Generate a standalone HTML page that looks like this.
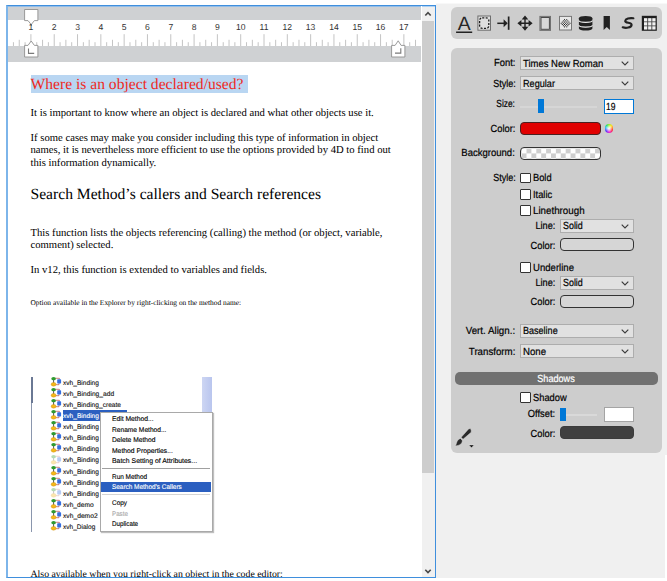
<!DOCTYPE html>
<html><head><meta charset="utf-8"><title>Where is an object declared/used?</title>
<style>
html,body{margin:0;padding:0;}
body{text-rendering:geometricPrecision;width:667px;height:581px;position:relative;overflow:hidden;background:#fff;font-family:"Liberation Sans",sans-serif;}
.abs,.abs *{position:absolute;}
#side{left:436px;top:3px;width:231px;height:575px;background:linear-gradient(#f8f8f8 0,#f8f8f8 1px,#f0f0f0 1px);}
#frame{left:6px;top:5px;width:430px;height:573px;box-sizing:border-box;border:1px solid #3f8fdd;border-left:2px solid #7db5ea;background:#fff;overflow:hidden;}
#doc{left:0;top:0;width:413px;height:571px;font-family:"Liberation Serif",serif;color:#000;}
#doc div{white-space:nowrap;}
.b{font-size:10.67px;line-height:12px;}
.h{font-size:15.6px;line-height:18px;}
.s{font-size:7.4px;line-height:9px;}
#ruler{left:0;top:0;width:413px;height:56px;background:#cfd1d3;box-shadow:inset 0 1px 0 #93bde8;}
#rwhite{left:0;top:14px;width:413px;height:26px;background:#fff;}
.num{font-family:"Liberation Sans",sans-serif;font-size:8.6px;line-height:10px;color:#333;width:20px;text-align:center;top:16px;}
#sb{left:414px;top:0;width:13px;height:571px;background:#f0f0f0;box-shadow:inset 0 1px 0 #aed1f3;}
#thumb{left:0;top:14.5px;width:12px;height:452.5px;background:#cdcdcd;}
.panel{background:#cdcdcd;border-radius:6px;}
.lbl{font-size:10.3px;line-height:12px;color:#000;white-space:nowrap;-webkit-text-stroke:0.2px currentColor;}
.r{text-align:right;}
.combo{box-sizing:border-box;border:1px solid #adadad;background:#e1e1e1;}
.combo span{left:2px;top:0.8px;font-size:10px;letter-spacing:-0.25px;line-height:12px;white-space:nowrap;}
.combo svg{right:5px;top:4px;}
.cb{box-sizing:border-box;width:11px;height:10.5px;border-radius:1px;border:1px solid #333;background:#fff;}
.sw{box-sizing:border-box;border:1px solid #333;border-radius:4px;height:13px;}
.mi{font-size:6.8px;line-height:8px;white-space:nowrap;color:#000;left:10.4px;}
.st{line-height:8px;white-space:nowrap;transform-origin:0 50%;-webkit-text-stroke:0.12px currentColor;}
</style></head><body>

<div id="side" class="abs">
<div class="panel" style="left:15px;top:4px;width:211px;height:32px;"></div>
<div class="panel" style="left:15px;top:44.5px;width:211px;height:405px;"></div>
<div style="left:229px;top:452px;width:2px;height:125px;background:#fff;"></div>
<svg style="left:15px;top:4px" width="211" height="32" viewBox="451 7 211 32">
<text x="464.2" y="29.8" font-family="Liberation Sans, sans-serif" font-size="19.4" text-anchor="middle" fill="#262626">A</text>
<rect x="456.1" y="31.5" width="16.1" height="1.5" fill="#222"/>
<rect x="477.9" y="16" width="12.6" height="14.2" fill="#dedede" stroke="#6e6e6e" stroke-width="1"/>
<rect x="479.6" y="17.8" width="9.2" height="10.6" rx="2.6" fill="none" stroke="#1c1c1c" stroke-width="1.3" stroke-dasharray="2.1 1.4"/>
<path d="M497.3 23.3H504.5" fill="none" stroke="#222" stroke-width="1.5"/><path d="M503.6 19.3L507.7 23.3L503.6 27.3Z" fill="#222"/>
<rect x="507.8" y="16.5" width="1.7" height="13.3" fill="#222"/>
<path d="M519.5 23.2H530.5 M525 17.7V28.7" stroke="#222" stroke-width="1.4" fill="none"/>
<path d="M525 15.5L528.3 19.5H521.7Z M525 30.8L528.3 26.8H521.7Z M517.4 23.2L521.4 19.9V26.5Z M532.6 23.2L528.6 19.9V26.5Z" fill="#222"/>
<rect x="539.9" y="16.4" width="10.6" height="14" fill="#d8d8d8" stroke="#707070" stroke-width="1"/>
<rect x="541" y="17.5" width="8.4" height="11.8" fill="#d8d8d8" stroke="#4a4a4a" stroke-width="1"/>
<rect x="559.5" y="16.4" width="12" height="13.6" fill="#e8e8e8" stroke="#777" stroke-width="1"/>
<rect x="560.70" y="22.80" width="1" height="1" fill="#1a1a1a"/>
<rect x="561.80" y="21.60" width="1" height="1" fill="#1a1a1a"/>
<rect x="561.80" y="24.00" width="1" height="1" fill="#1a1a1a"/>
<rect x="562.90" y="20.40" width="1" height="1" fill="#1a1a1a"/>
<rect x="562.90" y="22.80" width="1" height="1" fill="#1a1a1a"/>
<rect x="562.90" y="25.20" width="1" height="1" fill="#1a1a1a"/>
<rect x="564.00" y="19.20" width="1" height="1" fill="#1a1a1a"/>
<rect x="564.00" y="21.60" width="1" height="1" fill="#1a1a1a"/>
<rect x="564.00" y="24.00" width="1" height="1" fill="#1a1a1a"/>
<rect x="564.00" y="26.40" width="1" height="1" fill="#1a1a1a"/>
<rect x="565.10" y="20.40" width="1" height="1" fill="#1a1a1a"/>
<rect x="565.10" y="22.80" width="1" height="1" fill="#1a1a1a"/>
<rect x="565.10" y="25.20" width="1" height="1" fill="#1a1a1a"/>
<rect x="566.20" y="19.20" width="1" height="1" fill="#1a1a1a"/>
<rect x="566.20" y="21.60" width="1" height="1" fill="#1a1a1a"/>
<rect x="566.20" y="24.00" width="1" height="1" fill="#1a1a1a"/>
<rect x="566.20" y="26.40" width="1" height="1" fill="#1a1a1a"/>
<rect x="567.30" y="20.40" width="1" height="1" fill="#1a1a1a"/>
<rect x="567.30" y="22.80" width="1" height="1" fill="#1a1a1a"/>
<rect x="567.30" y="25.20" width="1" height="1" fill="#1a1a1a"/>
<rect x="568.40" y="21.60" width="1" height="1" fill="#1a1a1a"/>
<rect x="568.40" y="24.00" width="1" height="1" fill="#1a1a1a"/>
<rect x="569.50" y="22.80" width="1" height="1" fill="#1a1a1a"/>
<path d="M578.9 18.2a6.75 2.3 0 0 1 13.5 0V28.6a6.75 1.9 0 0 1 -13.5 0Z" fill="#222"/>
<path d="M578.9 20.5a6.75 1.8 0 0 0 13.5 0M578.9 25.3a6.75 1.8 0 0 0 13.5 0" fill="none" stroke="#ececec" stroke-width="1.2"/>
<path d="M603.6 16.1H609.9V30L606.75 27L603.6 30Z" fill="#222"/>
<path d="M633.4 18.3C629.6 17.6 625.4 18.9 625.2 21C625 23.3 632 22.4 631.6 25C631.2 27.7 626 28.4 622.7 27.3" fill="none" stroke="#222" stroke-width="2.1" stroke-linecap="round"/>
<rect x="641.8" y="15.8" width="15" height="15" fill="#1e1e1e"/>
<rect x="644" y="18.2" width="11.7" height="11.5" fill="#4a4a4a"/>
<rect x="644.00" y="18.20" width="3.2" height="3.2" fill="#f0f0f0"/>
<rect x="644.00" y="22.25" width="3.2" height="3.2" fill="#f0f0f0"/>
<rect x="644.00" y="26.30" width="3.2" height="3.2" fill="#f0f0f0"/>
<rect x="648.15" y="18.20" width="3.2" height="3.2" fill="#f0f0f0"/>
<rect x="648.15" y="22.25" width="3.2" height="3.2" fill="#f0f0f0"/>
<rect x="648.15" y="26.30" width="3.2" height="3.2" fill="#f0f0f0"/>
<rect x="652.30" y="18.20" width="3.2" height="3.2" fill="#f0f0f0"/>
<rect x="652.30" y="22.25" width="3.2" height="3.2" fill="#f0f0f0"/>
<rect x="652.30" y="26.30" width="3.2" height="3.2" fill="#f0f0f0"/>
</svg>
<div class="lbl" style="right:151.7px;top:55px;transform:scaleX(0.916);transform-origin:100% 50%;color:#000;">Font:</div>
<div class="combo" style="left:84px;top:53px;width:114px;height:14px;"></div>
<svg style="left:185px;top:58px" width="8" height="5" viewBox="0 0 8 5"><path d="M0.7 0.6L4 3.9L7.3 0.6" fill="none" stroke="#3a3a3a" stroke-width="1.15"/></svg>
<div class="lbl" style="left:86.6px;top:56px;transform:scaleX(0.920);transform-origin:0 50%;color:#000;">Times New Roman</div>
<div class="lbl" style="right:151.7px;top:76px;transform:scaleX(0.877);transform-origin:100% 50%;color:#000;">Style:</div>
<div class="combo" style="left:84px;top:73px;width:114px;height:14px;"></div>
<svg style="left:185px;top:78px" width="8" height="5" viewBox="0 0 8 5"><path d="M0.7 0.6L4 3.9L7.3 0.6" fill="none" stroke="#3a3a3a" stroke-width="1.15"/></svg>
<div class="lbl" style="left:86.6px;top:76px;transform:scaleX(0.887);transform-origin:0 50%;color:#000;">Regular</div>
<div class="lbl" style="right:151.7px;top:96px;transform:scaleX(0.812);transform-origin:100% 50%;color:#000;">Size:</div>
<div style="left:84px;top:102.6px;width:77px;height:2px;background:#d6d6d6;"></div>
<div style="left:102px;top:96px;width:5.5px;height:14px;background:#0078d7;"></div>
<div style="left:168px;top:96px;width:30px;height:15px;box-sizing:border-box;border:1px solid #0078d7;background:#fff;"></div>
<div class="lbl" style="left:170.3px;top:99px;transform:scaleX(0.829);transform-origin:0 50%;color:#000;">19</div>
<div class="lbl" style="right:151.7px;top:121px;transform:scaleX(0.910);transform-origin:100% 50%;color:#000;">Color:</div>
<div class="sw" style="left:84px;top:119px;width:81px;height:13px;background:#e10000;border-color:#4a2020;"></div>
<div style="left:168.9px;top:121.4px;width:8.6px;height:8.6px;border-radius:50%;background:radial-gradient(circle,#fff 0%,rgba(255,255,255,0.6) 30%,rgba(255,255,255,0) 65%),conic-gradient(from 0deg,#a0f020,#ffe020 12%,#ff3020 30%,#f020d0 48%,#5030ff 64%,#20c0f0 80%,#30e060 92%,#a0f020);"></div>
<div class="lbl" style="right:151.7px;top:145px;transform:scaleX(0.925);transform-origin:100% 50%;color:#000;">Background:</div>
<div class="sw" style="left:84px;top:144px;width:81px;height:13px;overflow:hidden;background-color:#fff;background-image:repeating-conic-gradient(#cfcfcf 0% 25%,#fff 0% 50%);background-size:9.8px 9.8px;background-position:0.6px 0.5px;"></div>
<div class="lbl" style="right:151.7px;top:170px;transform:scaleX(0.877);transform-origin:100% 50%;color:#000;">Style:</div>
<div class="cb" style="left:84px;top:169.5px;"></div>
<div class="lbl" style="left:97.4px;top:170px;transform:scaleX(0.902);transform-origin:0 50%;color:#000;">Bold</div>
<div class="cb" style="left:84px;top:186px;"></div>
<div class="lbl" style="left:97.4px;top:187px;transform:scaleX(0.902);transform-origin:0 50%;color:#000;">Italic</div>
<div class="cb" style="left:84px;top:202.3px;"></div>
<div class="lbl" style="left:97.4px;top:203px;transform:scaleX(0.948);transform-origin:0 50%;color:#000;">Linethrough</div>
<div class="lbl" style="right:111.6px;top:218px;transform:scaleX(0.891);transform-origin:100% 50%;color:#000;">Line:</div>
<div class="combo" style="left:124px;top:215.6px;width:73.5px;height:14px;"></div>
<svg style="left:184.5px;top:220.6px" width="8" height="5" viewBox="0 0 8 5"><path d="M0.7 0.6L4 3.9L7.3 0.6" fill="none" stroke="#3a3a3a" stroke-width="1.15"/></svg>
<div class="lbl" style="left:126.6px;top:218px;transform:scaleX(0.865);transform-origin:0 50%;color:#000;">Solid</div>
<div class="lbl" style="right:111.6px;top:238px;transform:scaleX(0.910);transform-origin:100% 50%;color:#000;">Color:</div>
<div class="sw" style="left:124px;top:235.2px;width:74px;height:13px;background:#d6d6d6;border-color:#333;"></div>
<div class="cb" style="left:84px;top:259px;"></div>
<div class="lbl" style="left:97.4px;top:260px;transform:scaleX(0.930);transform-origin:0 50%;color:#000;">Underline</div>
<div class="lbl" style="right:111.6px;top:275px;transform:scaleX(0.891);transform-origin:100% 50%;color:#000;">Line:</div>
<div class="combo" style="left:124px;top:272.5px;width:73.5px;height:14px;"></div>
<svg style="left:184.5px;top:277.5px" width="8" height="5" viewBox="0 0 8 5"><path d="M0.7 0.6L4 3.9L7.3 0.6" fill="none" stroke="#3a3a3a" stroke-width="1.15"/></svg>
<div class="lbl" style="left:126.6px;top:275px;transform:scaleX(0.865);transform-origin:0 50%;color:#000;">Solid</div>
<div class="lbl" style="right:111.6px;top:294px;transform:scaleX(0.910);transform-origin:100% 50%;color:#000;">Color:</div>
<div class="sw" style="left:124px;top:292px;width:74px;height:13px;background:#d6d6d6;border-color:#333;"></div>
<div class="lbl" style="right:151.7px;top:323px;transform:scaleX(0.948);transform-origin:100% 50%;color:#000;">Vert. Align.:</div>
<div class="combo" style="left:84px;top:320.5px;width:114px;height:14px;"></div>
<svg style="left:185px;top:325.5px" width="8" height="5" viewBox="0 0 8 5"><path d="M0.7 0.6L4 3.9L7.3 0.6" fill="none" stroke="#3a3a3a" stroke-width="1.15"/></svg>
<div class="lbl" style="left:86.6px;top:323px;transform:scaleX(0.878);transform-origin:0 50%;color:#000;">Baseline</div>
<div class="lbl" style="right:151.7px;top:344px;transform:scaleX(0.943);transform-origin:100% 50%;color:#000;">Transform:</div>
<div class="combo" style="left:84px;top:341px;width:114px;height:14px;"></div>
<svg style="left:185px;top:346px" width="8" height="5" viewBox="0 0 8 5"><path d="M0.7 0.6L4 3.9L7.3 0.6" fill="none" stroke="#3a3a3a" stroke-width="1.15"/></svg>
<div class="lbl" style="left:86.6px;top:344px;transform:scaleX(0.938);transform-origin:0 50%;color:#000;">None</div>
<div style="left:19px;top:369px;width:203px;height:12.5px;border-radius:5px;background:#717171;"></div>
<div class="lbl" style="left:70.2px;width:100px;text-align:center;top:371px;transform:scaleX(0.887);transform-origin:50% 50%;color:#fff;">Shadows</div>
<div class="cb" style="left:84px;top:389.3px;"></div>
<div class="lbl" style="left:97.4px;top:390px;transform:scaleX(0.905);transform-origin:0 50%;color:#000;">Shadow</div>
<div class="lbl" style="right:111.6px;top:406px;transform:scaleX(0.906);transform-origin:100% 50%;color:#000;">Offset:</div>
<div style="left:125px;top:410.6px;width:36px;height:2px;background:#d9d9d9;"></div>
<div style="left:124px;top:405px;width:6px;height:13px;background:#0078d7;"></div>
<div style="left:168px;top:404px;width:30px;height:15px;box-sizing:border-box;border:1px solid #a4a4a4;background:#fff;"></div>
<div class="lbl" style="right:111.6px;top:426px;transform:scaleX(0.910);transform-origin:100% 50%;color:#000;">Color:</div>
<div class="sw" style="left:124px;top:423px;width:73.5px;height:13px;background:#404040;border-color:#3c3c3c;"></div>
<svg style="left:18px;top:424px" width="22" height="22" viewBox="454 427 22 22">
<path d="M468.6 428.9L470.3 428.5L471.2 430L471.2 432.3L463 439.3L461.2 437.3Z" fill="#2a2a2a" stroke="#d8d8d8" stroke-width="0.5"/>
<path d="M460.4 438.4L462.2 440.2C462.8 443.6 459.2 445.9 455.1 445.8C457 444.6 455.8 440.2 460.4 438.4Z" fill="#2a2a2a" stroke="#d8d8d8" stroke-width="0.5"/>
<path d="M468.8 444.9L474.2 444.9L471.5 447.7Z" fill="#111" stroke="#e0e0e0" stroke-width="0.5"/>
</svg>
</div>
<div id="frame" class="abs">
<div id="doc">
<div style="left:22.6px;top:69px;width:217.3px;height:17.6px;background:#b9d6f2;"></div>
<div class="h" style="left:22.5px;top:70px;color:#ee2a1e;">Where is an object declared/used?</div>
<div class="b" style="left:22.5px;top:101px;">It is important to know where an object is declared and what other objects use it.</div>
<div class="b" style="left:22.5px;top:126px;">If some cases may make you consider including this type of information in object</div>
<div class="b" style="left:22.5px;top:138px;">names, it is nevertheless more efficient to use the options provided by 4D to find out</div>
<div class="b" style="left:22.5px;top:151px;">this information dynamically.</div>
<div class="h" style="left:22.5px;top:180px;">Search Method’s callers and Search references</div>
<div class="b" style="left:22.5px;top:221px;">This function lists the objects referencing (calling) the method (or object, variable,</div>
<div class="b" style="left:22.5px;top:233px;">comment) selected.</div>
<div class="b" style="left:22.5px;top:258px;">In v12, this function is extended to variables and fields.</div>
<div class="s" style="left:22.5px;top:292px;">Option available in the Explorer by right-clicking on the method name:</div>
<div class="b" style="left:22.5px;top:563px;font-size:9.82px;">Also available when you right-click an object in the code editor:</div>
<div id="shot" style="left:23px;top:371px;width:183px;height:156px;font-family:'Liberation Sans',sans-serif;">
<div style="left:0;top:0;width:1px;height:155px;background:#8a96ad;"></div>
<div style="left:0;top:0;width:1.5px;height:26px;background:#6a7894;"></div>
<div style="left:170.5px;top:0;width:10px;height:34.5px;background:linear-gradient(90deg,#cdd6f3,#b9c5ee);"></div>
<div style="left:31.7px;top:33.4px;width:64px;height:10.4px;background:#2b5fc0;"></div>
<svg style="left:19px;top:-1.00px" width="12" height="11" viewBox="0 0 12 11"><path d="M3.6 3.5V7" stroke="#444" stroke-width="0.9"/><path d="M5.4 2.3H9.4V3.6M5.6 8.7H9V7.2" stroke="#b04a4a" stroke-width="0.7" fill="none"/><ellipse cx="3.6" cy="2.7" rx="2.3" ry="1.6" fill="#2f9a2f"/><ellipse cx="3.6" cy="8.3" rx="2.5" ry="1.9" fill="#f5b818" stroke="#c98a10" stroke-width="0.4"/><rect x="7.2" y="3.2" width="3.9" height="4.2" rx="0.7" fill="#356ee0"/></svg>
<div class="st" style="left:32.1px;top:3px;font-size:6.7px;color:#111;transform:scaleX(0.986);">xvh_Binding</div>
<svg style="left:19px;top:10.08px" width="12" height="11" viewBox="0 0 12 11"><path d="M3.6 3.5V7" stroke="#444" stroke-width="0.9"/><path d="M5.4 2.3H9.4V3.6M5.6 8.7H9V7.2" stroke="#b04a4a" stroke-width="0.7" fill="none"/><ellipse cx="3.6" cy="2.7" rx="2.3" ry="1.6" fill="#2f9a2f"/><ellipse cx="3.6" cy="8.3" rx="2.5" ry="1.9" fill="#f5b818" stroke="#c98a10" stroke-width="0.4"/><rect x="7.2" y="3.2" width="3.9" height="4.2" rx="0.7" fill="#356ee0"/></svg>
<div class="st" style="left:32.1px;top:14px;font-size:6.7px;color:#111;transform:scaleX(0.996);">xvh_Binding_add</div>
<svg style="left:19px;top:21.16px" width="12" height="11" viewBox="0 0 12 11"><path d="M3.6 3.5V7" stroke="#444" stroke-width="0.9"/><path d="M5.4 2.3H9.4V3.6M5.6 8.7H9V7.2" stroke="#b04a4a" stroke-width="0.7" fill="none"/><ellipse cx="3.6" cy="2.7" rx="2.3" ry="1.6" fill="#2f9a2f"/><ellipse cx="3.6" cy="8.3" rx="2.5" ry="1.9" fill="#f5b818" stroke="#c98a10" stroke-width="0.4"/><rect x="7.2" y="3.2" width="3.9" height="4.2" rx="0.7" fill="#356ee0"/></svg>
<div class="st" style="left:32.1px;top:25px;font-size:6.7px;color:#111;transform:scaleX(0.987);">xvh_Binding_create</div>
<svg style="left:19px;top:32.24px" width="12" height="11" viewBox="0 0 12 11"><path d="M3.6 3.5V7" stroke="#444" stroke-width="0.9"/><path d="M5.4 2.3H9.4V3.6M5.6 8.7H9V7.2" stroke="#b04a4a" stroke-width="0.7" fill="none"/><ellipse cx="3.6" cy="2.7" rx="2.3" ry="1.6" fill="#2f9a2f"/><ellipse cx="3.6" cy="8.3" rx="2.5" ry="1.9" fill="#f5b818" stroke="#c98a10" stroke-width="0.4"/><rect x="7.2" y="3.2" width="3.9" height="4.2" rx="0.7" fill="#356ee0"/></svg>
<div class="st" style="left:32.1px;top:36px;font-size:6.7px;color:#fff;transform:scaleX(0.986);">xvh_Binding</div>
<svg style="left:19px;top:43.32px" width="12" height="11" viewBox="0 0 12 11"><path d="M3.6 3.5V7" stroke="#444" stroke-width="0.9"/><path d="M5.4 2.3H9.4V3.6M5.6 8.7H9V7.2" stroke="#b04a4a" stroke-width="0.7" fill="none"/><ellipse cx="3.6" cy="2.7" rx="2.3" ry="1.6" fill="#2f9a2f"/><ellipse cx="3.6" cy="8.3" rx="2.5" ry="1.9" fill="#f5b818" stroke="#c98a10" stroke-width="0.4"/><rect x="7.2" y="3.2" width="3.9" height="4.2" rx="0.7" fill="#356ee0"/></svg>
<div class="st" style="left:32.1px;top:47px;font-size:6.7px;color:#111;transform:scaleX(0.986);">xvh_Binding</div>
<svg style="left:19px;top:54.40px" width="12" height="11" viewBox="0 0 12 11"><path d="M3.6 3.5V7" stroke="#444" stroke-width="0.9"/><path d="M5.4 2.3H9.4V3.6M5.6 8.7H9V7.2" stroke="#b04a4a" stroke-width="0.7" fill="none"/><ellipse cx="3.6" cy="2.7" rx="2.3" ry="1.6" fill="#2f9a2f"/><ellipse cx="3.6" cy="8.3" rx="2.5" ry="1.9" fill="#f5b818" stroke="#c98a10" stroke-width="0.4"/><rect x="7.2" y="3.2" width="3.9" height="4.2" rx="0.7" fill="#356ee0"/></svg>
<div class="st" style="left:32.1px;top:58px;font-size:6.7px;color:#111;transform:scaleX(0.986);">xvh_Binding</div>
<svg style="left:19px;top:65.48px" width="12" height="11" viewBox="0 0 12 11"><path d="M3.6 3.5V7" stroke="#444" stroke-width="0.9"/><path d="M5.4 2.3H9.4V3.6M5.6 8.7H9V7.2" stroke="#b04a4a" stroke-width="0.7" fill="none"/><ellipse cx="3.6" cy="2.7" rx="2.3" ry="1.6" fill="#2f9a2f"/><ellipse cx="3.6" cy="8.3" rx="2.5" ry="1.9" fill="#f5b818" stroke="#c98a10" stroke-width="0.4"/><rect x="7.2" y="3.2" width="3.9" height="4.2" rx="0.7" fill="#356ee0"/></svg>
<div class="st" style="left:32.1px;top:69px;font-size:6.7px;color:#111;transform:scaleX(0.986);">xvh_Binding</div>
<svg style="left:19px;top:76.56px" width="12" height="11" viewBox="0 0 12 11" opacity="0.35"><path d="M3.6 3.5V7" stroke="#444" stroke-width="0.9"/><path d="M5.4 2.3H9.4V3.6M5.6 8.7H9V7.2" stroke="#b04a4a" stroke-width="0.7" fill="none"/><ellipse cx="3.6" cy="2.7" rx="2.3" ry="1.6" fill="#2f9a2f"/><ellipse cx="3.6" cy="8.3" rx="2.5" ry="1.9" fill="#f5b818" stroke="#c98a10" stroke-width="0.4"/><rect x="7.2" y="3.2" width="3.9" height="4.2" rx="0.7" fill="#356ee0"/></svg>
<div class="st" style="left:32.1px;top:80px;font-size:6.7px;color:#111;transform:scaleX(0.986);">xvh_Binding</div>
<svg style="left:19px;top:87.64px" width="12" height="11" viewBox="0 0 12 11"><path d="M3.6 3.5V7" stroke="#444" stroke-width="0.9"/><path d="M5.4 2.3H9.4V3.6M5.6 8.7H9V7.2" stroke="#b04a4a" stroke-width="0.7" fill="none"/><ellipse cx="3.6" cy="2.7" rx="2.3" ry="1.6" fill="#2f9a2f"/><ellipse cx="3.6" cy="8.3" rx="2.5" ry="1.9" fill="#f5b818" stroke="#c98a10" stroke-width="0.4"/><rect x="7.2" y="3.2" width="3.9" height="4.2" rx="0.7" fill="#356ee0"/></svg>
<div class="st" style="left:32.1px;top:92px;font-size:6.7px;color:#111;transform:scaleX(0.986);">xvh_Binding</div>
<svg style="left:19px;top:98.72px" width="12" height="11" viewBox="0 0 12 11"><path d="M3.6 3.5V7" stroke="#444" stroke-width="0.9"/><path d="M5.4 2.3H9.4V3.6M5.6 8.7H9V7.2" stroke="#b04a4a" stroke-width="0.7" fill="none"/><ellipse cx="3.6" cy="2.7" rx="2.3" ry="1.6" fill="#2f9a2f"/><ellipse cx="3.6" cy="8.3" rx="2.5" ry="1.9" fill="#f5b818" stroke="#c98a10" stroke-width="0.4"/><rect x="7.2" y="3.2" width="3.9" height="4.2" rx="0.7" fill="#356ee0"/></svg>
<div class="st" style="left:32.1px;top:103px;font-size:6.7px;color:#111;transform:scaleX(0.986);">xvh_Binding</div>
<svg style="left:19px;top:109.80px" width="12" height="11" viewBox="0 0 12 11" opacity="0.35"><path d="M3.6 3.5V7" stroke="#444" stroke-width="0.9"/><path d="M5.4 2.3H9.4V3.6M5.6 8.7H9V7.2" stroke="#b04a4a" stroke-width="0.7" fill="none"/><ellipse cx="3.6" cy="2.7" rx="2.3" ry="1.6" fill="#2f9a2f"/><ellipse cx="3.6" cy="8.3" rx="2.5" ry="1.9" fill="#f5b818" stroke="#c98a10" stroke-width="0.4"/><rect x="7.2" y="3.2" width="3.9" height="4.2" rx="0.7" fill="#356ee0"/></svg>
<div class="st" style="left:32.1px;top:114px;font-size:6.7px;color:#111;transform:scaleX(0.986);">xvh_Binding</div>
<svg style="left:19px;top:120.88px" width="12" height="11" viewBox="0 0 12 11"><path d="M3.6 3.5V7" stroke="#444" stroke-width="0.9"/><path d="M5.4 2.3H9.4V3.6M5.6 8.7H9V7.2" stroke="#b04a4a" stroke-width="0.7" fill="none"/><ellipse cx="3.6" cy="2.7" rx="2.3" ry="1.6" fill="#2f9a2f"/><ellipse cx="3.6" cy="8.3" rx="2.5" ry="1.9" fill="#f5b818" stroke="#c98a10" stroke-width="0.4"/><rect x="7.2" y="3.2" width="3.9" height="4.2" rx="0.7" fill="#356ee0"/></svg>
<div class="st" style="left:32.1px;top:125px;font-size:6.7px;color:#111;transform:scaleX(0.993);">xvh_demo</div>
<svg style="left:19px;top:131.96px" width="12" height="11" viewBox="0 0 12 11"><path d="M3.6 3.5V7" stroke="#444" stroke-width="0.9"/><path d="M5.4 2.3H9.4V3.6M5.6 8.7H9V7.2" stroke="#b04a4a" stroke-width="0.7" fill="none"/><ellipse cx="3.6" cy="2.7" rx="2.3" ry="1.6" fill="#2f9a2f"/><ellipse cx="3.6" cy="8.3" rx="2.5" ry="1.9" fill="#f5b818" stroke="#c98a10" stroke-width="0.4"/><rect x="7.2" y="3.2" width="3.9" height="4.2" rx="0.7" fill="#356ee0"/></svg>
<div class="st" style="left:32.1px;top:136px;font-size:6.7px;color:#111;transform:scaleX(1.002);">xvh_demo2</div>
<svg style="left:19px;top:143.04px" width="12" height="11" viewBox="0 0 12 11"><path d="M3.6 3.5V7" stroke="#444" stroke-width="0.9"/><path d="M5.4 2.3H9.4V3.6M5.6 8.7H9V7.2" stroke="#b04a4a" stroke-width="0.7" fill="none"/><ellipse cx="3.6" cy="2.7" rx="2.3" ry="1.6" fill="#2f9a2f"/><ellipse cx="3.6" cy="8.3" rx="2.5" ry="1.9" fill="#f5b818" stroke="#c98a10" stroke-width="0.4"/><rect x="7.2" y="3.2" width="3.9" height="4.2" rx="0.7" fill="#356ee0"/></svg>
<div class="st" style="left:32.1px;top:147px;font-size:6.7px;color:#111;transform:scaleX(0.975);">xvh_Dialog</div>
<div style="left:68.8px;top:34.8px;width:112.8px;height:120px;box-sizing:border-box;border:1px solid #a9a9a9;background:#fff;box-shadow:1px 1px 1px rgba(0,0,0,0.25);">
<div style="left:0.8px;top:55.6px;width:108px;height:1px;background:#a0a0a0;"></div>
<div style="left:0.8px;top:81.5px;width:108px;height:1px;background:#d4d4d4;"></div>
<div style="left:0px;top:69.7px;width:110.6px;height:10px;background:#2b5fc0;"></div>
</div>
<div class="st" style="left:80.8px;top:39px;font-size:6.8px;color:#000;transform:scaleX(0.992);">Edit Method...</div>
<div class="st" style="left:80.8px;top:50px;font-size:6.8px;color:#000;transform:scaleX(0.974);">Rename Method...</div>
<div class="st" style="left:80.8px;top:60px;font-size:6.8px;color:#000;transform:scaleX(0.981);">Delete Method</div>
<div class="st" style="left:80.8px;top:71px;font-size:6.8px;color:#000;transform:scaleX(0.993);">Method Properties...</div>
<div class="st" style="left:80.8px;top:81px;font-size:6.8px;color:#000;transform:scaleX(1.014);">Batch Setting of Attributes...</div>
<div class="st" style="left:80.8px;top:97px;font-size:6.8px;color:#000;transform:scaleX(0.948);">Run Method</div>
<div class="st" style="left:80.8px;top:107px;font-size:6.8px;color:#fff;transform:scaleX(0.944);">Search Method’s Callers</div>
<div class="st" style="left:80.8px;top:123px;font-size:6.8px;color:#000;transform:scaleX(0.945);">Copy</div>
<div class="st" style="left:80.8px;top:134px;font-size:6.8px;color:#aaa;transform:scaleX(0.914);">Paste</div>
<div class="st" style="left:80.8px;top:144px;font-size:6.8px;color:#000;transform:scaleX(0.921);">Duplicate</div>
</div>
</div>
<div id="ruler"><div id="rwhite"></div>
<svg style="left:0;top:0" width="413" height="56" viewBox="8 6 413 56">
<path d="M13.43 42.2V46 M19.25 39.8V46 M25.08 42.2V46 M30.91 34.2V46 M36.74 42.2V46 M42.56 39.8V46 M48.39 42.2V46 M54.22 34.2V46 M60.05 42.2V46 M65.88 39.8V46 M71.70 42.2V46 M77.53 34.2V46 M83.36 42.2V46 M89.18 39.8V46 M95.01 42.2V46 M100.84 34.2V46 M106.67 42.2V46 M112.49 39.8V46 M118.32 42.2V46 M124.15 34.2V46 M129.98 42.2V46 M135.80 39.8V46 M141.63 42.2V46 M147.46 34.2V46 M153.29 42.2V46 M159.11 39.8V46 M164.94 42.2V46 M170.77 34.2V46 M176.60 42.2V46 M182.42 39.8V46 M188.25 42.2V46 M194.08 34.2V46 M199.91 42.2V46 M205.73 39.8V46 M211.56 42.2V46 M217.39 34.2V46 M223.22 42.2V46 M229.04 39.8V46 M234.87 42.2V46 M240.70 34.2V46 M246.53 42.2V46 M252.35 39.8V46 M258.18 42.2V46 M264.01 34.2V46 M269.84 42.2V46 M275.67 39.8V46 M281.49 42.2V46 M287.32 34.2V46 M293.15 42.2V46 M298.98 39.8V46 M304.80 42.2V46 M310.63 34.2V46 M316.46 42.2V46 M322.29 39.8V46 M328.11 42.2V46 M333.94 34.2V46 M339.77 42.2V46 M345.60 39.8V46 M351.42 42.2V46 M357.25 34.2V46 M363.08 42.2V46 M368.91 39.8V46 M374.73 42.2V46 M380.56 34.2V46 M386.39 42.2V46 M392.21 39.8V46 M398.04 42.2V46 M403.87 34.2V46 M409.70 42.2V46 M415.52 39.8V46" stroke="#bdbdbd" stroke-width="0.9" fill="none"/>
<path d="M24.6 9.5H37.9V20.6H34.4L31.5 24.2L31.2 26L30.9 24.2L28 20.6H24.6Z" fill="#fff" stroke="#909090" stroke-width="0.9"/>
<path d="M24.6 57H37.9V45.4H34.4L31.2 41L28 45.4H24.6Z" fill="#fff" stroke="#909090" stroke-width="0.9"/>
<path d="M28.5 48.5V53.4H34.2" fill="none" stroke="#7a7a7a" stroke-width="1.1"/>
<path d="M391.6 57H404.9V45.4H401.1L398.2 40.8L395.1 45.4H391.6Z" fill="#fff" stroke="#909090" stroke-width="0.9"/>
<path d="M395 53.1H400.8V48.2" fill="none" stroke="#7a7a7a" stroke-width="1.1"/>
</svg>
<div class="num" style="left:36.22px;">2</div>
<div class="num" style="left:59.53px;">3</div>
<div class="num" style="left:82.84px;">4</div>
<div class="num" style="left:106.15px;">5</div>
<div class="num" style="left:129.46px;">6</div>
<div class="num" style="left:152.77px;">7</div>
<div class="num" style="left:176.08px;">8</div>
<div class="num" style="left:199.39px;">9</div>
<div class="num" style="left:222.70px;">10</div>
<div class="num" style="left:246.01px;">11</div>
<div class="num" style="left:269.32px;">12</div>
<div class="num" style="left:292.63px;">13</div>
<div class="num" style="left:315.94px;">14</div>
<div class="num" style="left:339.25px;">15</div>
<div class="num" style="left:362.56px;">16</div>
<div class="num" style="left:385.87px;">17</div>
<div class="num" style="left:12.91px;">1</div>
</div>
<div id="sb"><div id="thumb"></div>
<svg style="left:0;top:0" width="13" height="571" viewBox="422 6 13 571"><path d="M425.3 15.5L428 12.6L430.7 15.5M425.3 569.7L428 572.6L430.7 569.7" fill="none" stroke="#484848" stroke-width="1.6"/></svg>
</div>
</div>
</body></html>
